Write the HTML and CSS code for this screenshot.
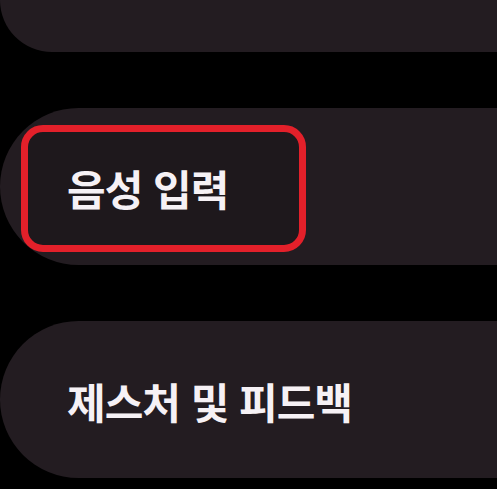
FILE: index.html
```html
<!DOCTYPE html>
<html lang="ko">
<head>
  <meta charset="UTF-8">
  <title>설정 메뉴</title>
  <meta name="viewport" content="width=device-width, initial-scale=1">
  <link rel="stylesheet" href="styles.css">
</head>
<body>
<ul class="menu">
  <li class="menu-item cut-top"></li>
  <li class="menu-item">
    <span class="focus-ring">
      <span class="label">음성 입력</span>
    </span>
  </li>
  <li class="menu-item">
    <span class="label plain">제스처 및 피드백</span>
  </li>
</ul>
</body>
</html>
```

FILE: styles.css
```css
html, body {
    margin: 0;
    background: #000;
    height: 100%;
    overflow: hidden;
}

.menu {
    list-style: none;
    margin: 0;
    padding: 0;
    display: flex;
    flex-direction: column;
    gap: 56px;
}

.menu-item {
    height: 157px;
    background: #231c21;
    border-radius: 79px 0 0 79px;
    display: flex;
    align-items: center;
}

/* first row is scrolled mostly out of view */
.menu-item.cut-top {
    height: 52px;
    border-radius: 0 0 0 79px;
}

.focus-ring {
    box-sizing: border-box;
    margin-left: 21px;
    margin-top: 3px;
    width: 285px;
    height: 127px;
    border: 7px solid #e3202a;
    border-radius: 22px;
    background: #1e181c;
    display: flex;
    align-items: center;
    padding-left: 39px;
}

.label {
    font-family: "Noto Sans CJK KR", "Noto Sans", sans-serif;
    font-weight: 700;
    font-size: 42px;
    letter-spacing: -1px;
    color: #f6f1f5;
    line-height: 1;
}

.label.plain {
    margin-left: 67px;
    margin-top: 3px;
}
```
